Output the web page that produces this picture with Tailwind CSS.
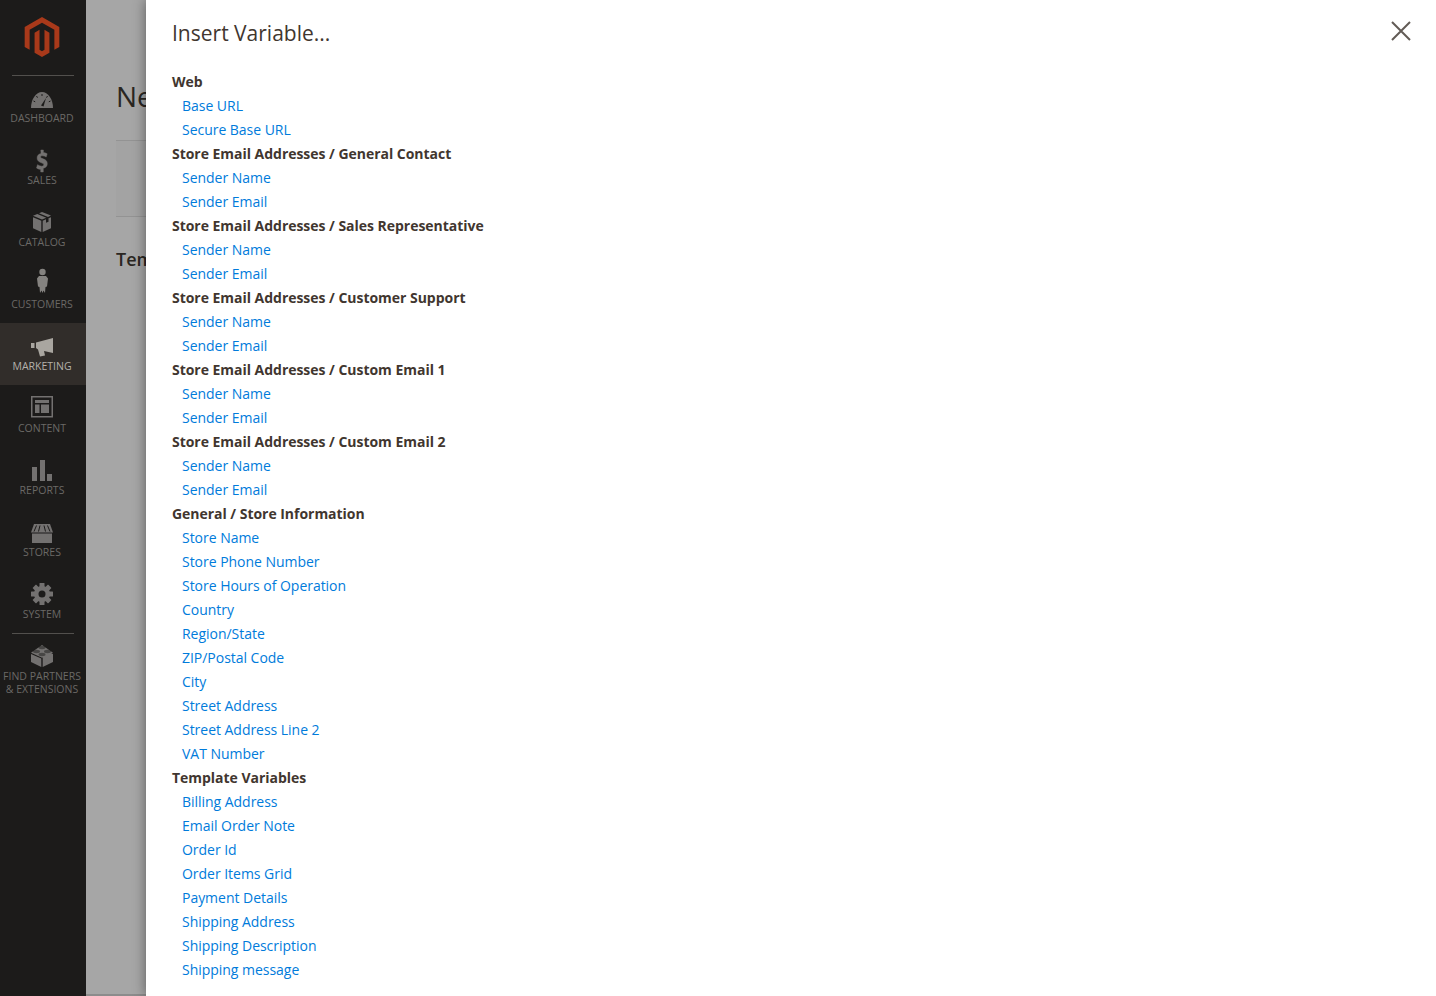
<!DOCTYPE html>
<html lang="en">
  <head>
    <meta charset="UTF-8" />
    <meta name="viewport" content="width=device-width, initial-scale=1.0" />
    <title>Insert Variable</title>
    <script src="https://cdn.jsdelivr.net/npm/@tailwindcss/browser@4"></script>
  </head>
  <body class="font-['Open_Sans',sans-serif]">
    <div class="flex h-[996px] w-[1436px] overflow-hidden bg-[#a6a6a6]">
      <!-- Sidebar -->
      <nav class="flex h-full w-[86px] shrink-0 flex-col bg-[#1c1b1a] text-center text-[10.5px] leading-[13px] text-[#6b6966]">
        <div class="flex h-[75px] shrink-0 justify-center pt-[17px] pr-[2px]">
          <svg class="h-[40px] w-[40px]" viewBox="0 0 24 24" fill="#a8391a"><path d="M12 24l-4.455-2.572v-12l2.97-1.715v12.001l1.485.902 1.485-.902V7.713l2.971 1.715v12L12 24zM22.391 6v12l-2.969 1.714V7.713L12 3.43 4.574 7.713v12.001L1.609 18V6L12 0l10.391 6z" /></svg>
        </div>
        <div class="mx-[12px] h-px shrink-0 bg-[#52504d]"></div>

        <a class="-mt-px block h-[62px] pt-1 pr-[2px]">
          <svg class="mx-auto block h-[32px] w-[40px]" viewBox="0 0 40 32" fill="#737170">
            <path d="M9 29c0-9 5-16 11-16s11 7 11 16z" />
            <path d="M20 15v2M14.500 17l1 1.700M25.500 17l-1 1.700M11.500 22l1.700 .8M28.500 22l-1.700 .8" stroke="#1c1b1a" stroke-width="1" />
            <path d="M19 26.500l5-7.500-2.500 8.500z" fill="#1c1b1a" />
          </svg>
          <span class="mt-px block">DASHBOARD</span>
        </a>
        <a class="block h-[62px] pt-1 pr-[2px]">
          <svg class="mx-auto block h-[32px] w-[40px]" viewBox="0 0 40 32" fill="#737170" stroke="#737170" stroke-width=".4">
            <path transform="matrix(1 0 0 1.130 0 -1.200)" d="M18.800 9h2.600v2.200c1.500 .2 2.800 .6 3.800 1.200l-1 2.800c-1.200-.6-2.500-1-3.800-1-1.200 0-1.800 .4-1.800 1 0 .7 .8 1 2.500 1.600 2.900 .9 4.200 2.200 4.200 4.300 0 2.100-1.500 3.700-4 4.100V28.500h-2.600v-2.200c-1.700-.2-3.200-.7-4.200-1.400l1-2.900c1.300 .8 2.800 1.300 4.200 1.300 1.300 0 2-.5 2-1.200 0-.7-.7-1.200-2.300-1.700-2.700-.9-4.300-2.100-4.300-4.300 0-2 1.400-3.500 3.900-3.900z" />
          </svg>
          <span class="mt-px block">SALES</span>
        </a>
        <a class="block h-[62px] pt-1 pr-[2px]">
          <svg class="mx-auto block h-[32px] w-[40px]" viewBox="0 0 40 32" fill="#737170">
            <path d="M20 9l9 3.600-3 1.300-9-3.700zM15.300 11l9 3.700-4.300 1.800-9-3.800zM11 14.200l8.300 3.500V29L11 25.200zM29 14.200v11L20.700 29V17.700l3.300-1.400v3.500l2.500-1v-3.500z" />
          </svg>
          <span class="mt-px block">CATALOG</span>
        </a>
        <a class="block h-[62px] pt-1 pr-[2px]">
          <svg class="mx-auto block h-[32px] w-[40px]" viewBox="0 0 40 32" fill="#858380">
            <circle cx="20.500" cy="7" r="3.200" />
            <path d="M17 11h7l2 2.500-1 8-1.500 .5-.5 6-1.500-2.500-1 2.500-1-2.500-1.500 2.500-.5-6-1.500-.5-1-8z" />
          </svg>
          <span class="mt-px block">CUSTOMERS</span>
        </a>
        <a class="block h-[62px] bg-[#312d2a] pt-1 pr-[2px] text-[#b4b1ac]">
          <svg class="mx-auto block h-[32px] w-[40px]" viewBox="0 0 40 32" fill="#a9a6a0">
            <path d="M9 16h3.500v5H9zM14 15.500L31 11v15l-9-2 1 4.500-5 1-2-7-2-1.500z" />
          </svg>
          <span class="mt-px block">MARKETING</span>
        </a>
        <a class="block h-[62px] pt-1 pr-[2px]">
          <svg class="mx-auto block h-[32px] w-[40px]" viewBox="0 0 40 32" fill="#737170">
            <path fill-rule="evenodd" d="M9 7h22v21.500H9zM10.500 8.500v18.500h19V8.500z" />
            <path d="M13 11h14v3H13zM13 15.500h4.500V24H13zM19 15.500h8V24h-8z" />
          </svg>
          <span class="mt-px block">CONTENT</span>
        </a>
        <a class="block h-[62px] pt-1 pr-[2px]">
          <svg class="mx-auto block h-[32px] w-[40px]" viewBox="0 0 40 32" fill="#737170">
            <path d="M10 16h5v14h-5zM18 9h5v21h-5zM25 23h5v7h-5z" />
          </svg>
          <span class="mt-px block">REPORTS</span>
        </a>
        <a class="block h-[62px] pt-1 pr-[2px]">
          <svg class="mx-auto block h-[32px] w-[40px]" viewBox="0 0 40 32" fill="#737170">
            <path d="M12 11h16l3 8.500H9z" />
            <path d="M14.500 12.500l-2.500 6M18 12.500l-1.500 6M22 12.500l1.500 6M25.500 12.500l2.500 6" stroke="#1c1b1a" stroke-width="1" />
            <path d="M10 20.500h20V30H10z" />
          </svg>
          <span class="mt-px block">STORES</span>
        </a>
        <a class="block h-[62px] pt-1 pr-[2px]">
          <svg class="mx-auto block h-[32px] w-[40px]" viewBox="0 0 40 32" fill="#737170">
            <circle cx="20" cy="19" r="8" />
            <g>
              <rect x="17.500" y="8" width="5" height="5" rx=".5" />
              <rect x="17.500" y="8" width="5" height="5" rx=".5" transform="rotate(45 20 19)" />
              <rect x="17.500" y="8" width="5" height="5" rx=".5" transform="rotate(90 20 19)" />
              <rect x="17.500" y="8" width="5" height="5" rx=".5" transform="rotate(135 20 19)" />
              <rect x="17.500" y="8" width="5" height="5" rx=".5" transform="rotate(180 20 19)" />
              <rect x="17.500" y="8" width="5" height="5" rx=".5" transform="rotate(225 20 19)" />
              <rect x="17.500" y="8" width="5" height="5" rx=".5" transform="rotate(270 20 19)" />
              <rect x="17.500" y="8" width="5" height="5" rx=".5" transform="rotate(315 20 19)" />
            </g>
            <circle cx="20" cy="19" r="3.500" fill="#1c1b1a" />
          </svg>
          <span class="mt-px block">SYSTEM</span>
        </a>
        <div class="mx-[12px] h-px shrink-0 bg-[#52504d]"></div>
        <a class="block pt-[3px] pr-[2px]">
          <svg class="mx-auto block h-[32px] w-[40px]" viewBox="0 0 40 32" fill="#737170">
            <path d="M20 12l11 5v8l-10.300 5V21.500zM9 17l10.300 4.500V30L9 25z" />
            <path d="M20 8l11 7.800-11 5-11-5z" />
            <ellipse cx="20" cy="10.500" rx="3.500" ry="1.700" fill="#1c1b1a" opacity=".5" />
            <ellipse cx="14.500" cy="14.500" rx="3.500" ry="1.700" fill="#1c1b1a" opacity=".5" />
            <ellipse cx="25.500" cy="14.500" rx="3.500" ry="1.700" fill="#1c1b1a" opacity=".5" />
            <ellipse cx="20" cy="17.500" rx="3.500" ry="1.700" fill="#1c1b1a" opacity=".5" />
          </svg>
          <span class="mt-px block whitespace-nowrap">FIND PARTNERS<br />&amp; EXTENSIONS</span>
        </a>
      </nav>

      <!-- Page behind the overlay, cut off by the modal -->
      <main class="w-[60px] shrink-0 overflow-hidden border-b-2 border-[#8c8c8c] pt-[77px] pl-[30px] text-[#2a2622]">
        <h1 class="text-[28px] leading-[38px] whitespace-nowrap">Ne</h1>
        <div class="mt-[25px] h-[77px] border-y border-[#939393] bg-[#a3a3a3]"></div>
        <h2 class="mt-[29px] text-[18px] leading-[26px] font-semibold whitespace-nowrap">Tem</h2>
      </main>

      <!-- Modal -->
      <aside class="z-10 flex-1 bg-white pl-[26px] text-[14px] leading-[24px] shadow-[0_0_12px_rgba(0,0,0,0.45)]">
        <header class="flex h-[70px] items-start justify-between">
          <h1 class="pt-[18px] text-[21px] leading-[30px] text-[#41362f]">Insert Variable...</h1>
          <button type="button" class="mt-[21px] mr-[25px] text-[#625b56]" aria-label="Close">
            <svg class="block h-[20px] w-[20px]" viewBox="0 0 20 20" fill="none" stroke="currentColor" stroke-width="2"><path d="M1 1l18 18M19 1L1 19" /></svg>
          </button>
        </header>
        <div class="tracking-[-0.03px] text-[#007bdb]">
          <h3 class="font-bold text-[#41362f]">Web</h3>
          <a class="block pl-[10px]">Base URL</a>
          <a class="block pl-[10px]">Secure Base URL</a>
          <h3 class="font-bold text-[#41362f]">Store Email Addresses / General Contact</h3>
          <a class="block pl-[10px]">Sender Name</a>
          <a class="block pl-[10px]">Sender Email</a>
          <h3 class="font-bold text-[#41362f]">Store Email Addresses / Sales Representative</h3>
          <a class="block pl-[10px]">Sender Name</a>
          <a class="block pl-[10px]">Sender Email</a>
          <h3 class="font-bold text-[#41362f]">Store Email Addresses / Customer Support</h3>
          <a class="block pl-[10px]">Sender Name</a>
          <a class="block pl-[10px]">Sender Email</a>
          <h3 class="font-bold text-[#41362f]">Store Email Addresses / Custom Email 1</h3>
          <a class="block pl-[10px]">Sender Name</a>
          <a class="block pl-[10px]">Sender Email</a>
          <h3 class="font-bold text-[#41362f]">Store Email Addresses / Custom Email 2</h3>
          <a class="block pl-[10px]">Sender Name</a>
          <a class="block pl-[10px]">Sender Email</a>
          <h3 class="font-bold text-[#41362f]">General / Store Information</h3>
          <a class="block pl-[10px]">Store Name</a>
          <a class="block pl-[10px]">Store Phone Number</a>
          <a class="block pl-[10px]">Store Hours of Operation</a>
          <a class="block pl-[10px]">Country</a>
          <a class="block pl-[10px]">Region/State</a>
          <a class="block pl-[10px]">ZIP/Postal Code</a>
          <a class="block pl-[10px]">City</a>
          <a class="block pl-[10px]">Street Address</a>
          <a class="block pl-[10px]">Street Address Line 2</a>
          <a class="block pl-[10px]">VAT Number</a>
          <h3 class="font-bold text-[#41362f]">Template Variables</h3>
          <a class="block pl-[10px]">Billing Address</a>
          <a class="block pl-[10px]">Email Order Note</a>
          <a class="block pl-[10px]">Order Id</a>
          <a class="block pl-[10px]">Order Items Grid</a>
          <a class="block pl-[10px]">Payment Details</a>
          <a class="block pl-[10px]">Shipping Address</a>
          <a class="block pl-[10px]">Shipping Description</a>
          <a class="block pl-[10px]">Shipping message</a>
        </div>
      </aside>
    </div>
  </body>
</html>
